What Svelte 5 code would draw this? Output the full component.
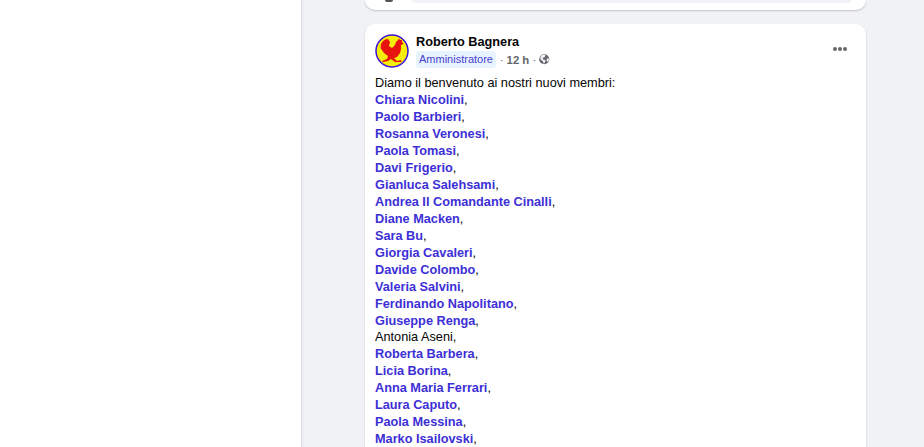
<script>
  const members = [
    { name: 'Chiara Nicolini', link: true },
    { name: 'Paolo Barbieri', link: true },
    { name: 'Rosanna Veronesi', link: true },
    { name: 'Paola Tomasi', link: true },
    { name: 'Davi Frigerio', link: true },
    { name: 'Gianluca Salehsami', link: true },
    { name: 'Andrea Il Comandante Cinalli', link: true },
    { name: 'Diane Macken', link: true },
    { name: 'Sara Bu', link: true },
    { name: 'Giorgia Cavaleri', link: true },
    { name: 'Davide Colombo', link: true },
    { name: 'Valeria Salvini', link: true },
    { name: 'Ferdinando Napolitano', link: true },
    { name: 'Giuseppe Renga', link: true },
    { name: 'Antonia Aseni', link: false },
    { name: 'Roberta Barbera', link: true },
    { name: 'Licia Borina', link: true },
    { name: 'Anna Maria Ferrari', link: true },
    { name: 'Laura Caputo', link: true },
    { name: 'Paola Messina', link: true },
    { name: 'Marko Isailovski', link: true }
  ];
</script>

<div class="page">
  <div class="side"></div>
  <main class="feed">
    <div class="card prev">
      <div class="prev-avatar"></div>
      <div class="prev-input"></div>
    </div>
    <article class="card post">
      <header class="head">
        <svg class="avatar" viewBox="0 0 34 34" aria-hidden="true">
          <circle cx="17" cy="17" r="16" fill="#f5ee0a" stroke="#3d10d8" stroke-width="1.5" />
          <path fill="#e8120f" d="M6 10C7 7 10 5 13 5L15 8 14 12 17 14 20 11 21 8 23 6 24 4.5 25 6 27 6 27 8 28.5 10 26 11 26 15 25 19 22 23 19 24 22 27 26 26 26.5 28 20 28 16 25 13 27 8 28 7 27 12 25 13 22 9 19 5.5 14Z" />
        </svg>
        <div class="who">
          <div class="name">Roberto Bagnera</div>
          <div class="meta">
            <span class="badge">Amministratore</span>
            <span class="dot">·</span>
            <span class="time">12 h</span>
            <span class="dot">·</span>
            <svg class="globe" viewBox="0 0 12 12" aria-hidden="true">
              <circle cx="6" cy="6" r="5.8" fill="#65676b" />
              <path fill="#f1f2f6" d="M3 1.5l3-1 1.5 1.2-1.3 2-2.2 1 1.2 2 2.1.2-.2 2-1.6 2.4-1-3-3-2.2 0-2.2zM9 5l2.4 0 0 2-1.4 2.2-1.2-1.2z" />
            </svg>
          </div>
        </div>
        <div class="more"><span></span><span></span><span></span></div>
      </header>
      <div class="body">
        <div>Diamo il benvenuto ai nostri nuovi membri:</div>
        {#each members as m}
          <div>{#if m.link}<a href="#top">{m.name}</a>{:else}{m.name}{/if},</div>
        {/each}
      </div>
    </article>
  </main>
</div>

<style>
  :global(body) {
    margin: 0;
    overflow: hidden;
    background: #fff;
  }
  .page {
    display: flex;
    height: 447px;
    overflow: hidden;
    font-family: "Liberation Sans", Arial, sans-serif;
  }
  .side {
    width: 301px;
    flex: none;
    background: #fff;
  }
  .feed {
    flex: 1;
    background: #f1f2f6;
    box-shadow: inset 3px 0 3px -2px rgba(0, 0, 0, 0.1);
    padding-left: 64px;
  }
  .card {
    width: 501px;
    background: #fff;
    border-radius: 10px;
    box-shadow: 0 1px 2px rgba(0, 0, 0, 0.2);
  }
  .prev {
    height: 10px;
    border-radius: 0 0 10px 10px;
    display: flex;
    gap: 19px;
    padding-left: 20px;
    box-sizing: border-box;
    overflow: hidden;
  }
  .prev-avatar {
    width: 8px;
    height: 2px;
    border-radius: 0 0 4px 4px;
    background: #555;
  }
  .prev-input {
    width: 439px;
    height: 3px;
    background: #f0f2f5;
    border-radius: 0 0 10px 10px;
  }
  .post {
    margin-top: 14px;
    height: 500px;
  }
  .head {
    display: flex;
    align-items: flex-start;
    padding: 10px 10px 0;
  }
  .avatar {
    width: 34px;
    height: 34px;
    flex: none;
  }
  .who {
    margin-left: 7px;
    flex: 1;
  }
  .name {
    font-size: 12.72px;
    font-weight: 700;
    line-height: 16px;
    color: #050505;
  }
  .meta {
    display: flex;
    align-items: center;
    margin-top: 1px;
    height: 17px;
    font-size: 11.3px;
    color: #65676b;
  }
  .badge {
    background: #e7f3ff;
    color: #4a3fd0;
    font-size: 11px;
    padding: 0 3.5px 0 3px;
    line-height: 17px;
    border-radius: 4px;
  }
  .dot {
    margin: 0 3.2px;
  }
  .time {
    font-weight: 700;
  }
  .globe {
    width: 10.5px;
    height: 10.5px;
  }
  .more {
    display: flex;
    gap: 1px;
    margin: 13px 9px 0 0;
  }
  .more span {
    width: 4px;
    height: 4px;
    border-radius: 50%;
    background: #65676b;
  }
  .body {
    padding: 7.18px 10px 0;
    font-size: 12.72px;
    line-height: 16.95px;
    color: #050505;
  }
  .body a {
    color: #3d2fd6;
    font-weight: 700;
    text-decoration: none;
  }
</style>
